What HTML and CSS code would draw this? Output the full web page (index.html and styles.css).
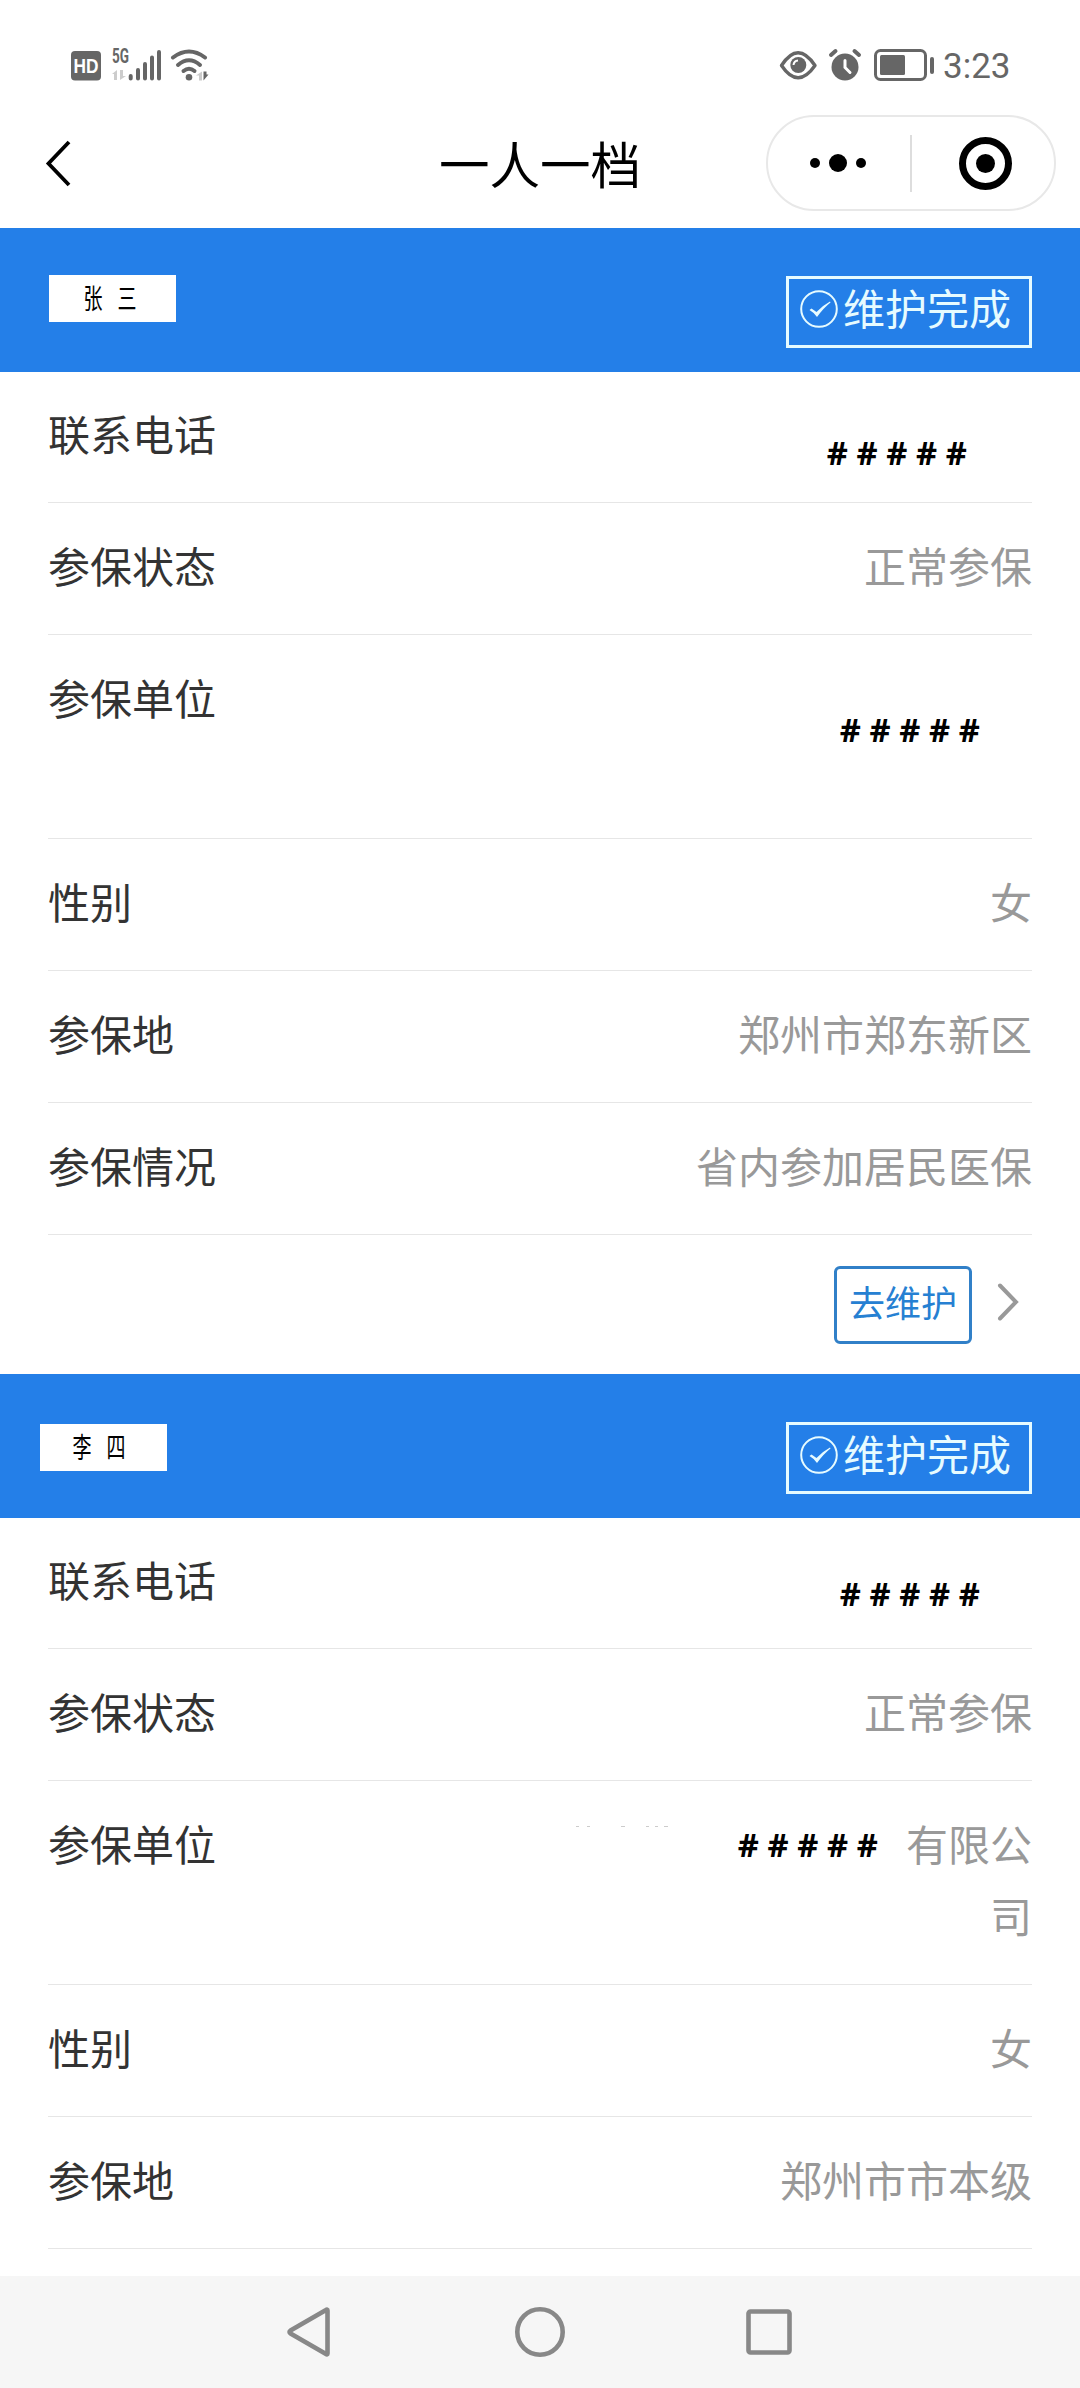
FILE: index.html
```html
<!DOCTYPE html>
<html lang="zh-CN">
<head>
<meta charset="utf-8">
<title>一人一档</title>
<link rel="stylesheet" href="styles.css">
</head>
<body>
<div class="screen">
  <div class="status-bar">
    <svg class="status-left" width="150" height="44" viewBox="66 44 150 44">
      <rect x="71" y="51" width="30" height="29.500" rx="4" fill="#666"/>
      <text x="86" y="73" class="hd" textLength="25" lengthAdjust="spacingAndGlyphs">HD</text>
      <text x="112" y="63" class="net" textLength="17" lengthAdjust="spacingAndGlyphs">5G</text>
      <path d="M112 74l5-4v10h-3v-6zM120 70v10l6-4h-3v-6z" fill="#ccc"/>
      <path d="M130.700 76v2.500M138 70v8.500M145 64v14.500M152 57.500v21M159 52v26.500" stroke="#666" stroke-width="4" stroke-linecap="round"/>
      <g fill="none" stroke="#666" stroke-width="4" stroke-linecap="round">
        <path d="M173 57.500Q189 45.500 205 57.500"/><path d="M178 65Q189 55.500 200 65"/><path d="M183.500 71Q189 66.500 194.500 71"/>
      </g>
      <circle cx="189" cy="77.300" r="3.300" fill="#666"/>
      <path d="M196 75.500l6-4v9h-3v-5z" fill="#ccc"/>
      <path d="M203.500 71.500v9l5-6h-2v-3z" fill="#666"/>
    </svg>
    <div class="status-right">
      <svg width="160" height="44" viewBox="778 44 160 44">
        <path d="M781.500 65.500Q798 40 815 65.500Q798 90 781.500 65.500z" fill="none" stroke="#666" stroke-width="3.400" stroke-linejoin="round"/>
        <circle cx="798.300" cy="65" r="8" fill="#666"/>
        <path d="M793.500 65a5 5 0 0 1 4.500-4.500" fill="none" stroke="#fff" stroke-width="2"/>
        <circle cx="845" cy="67" r="13.500" fill="#666"/>
        <path d="M845 60.500v7l5 5" fill="none" stroke="#fff" stroke-width="3" stroke-linecap="round"/>
        <path d="M831 55l4.500-4M859 55l-4.500-4" stroke="#666" stroke-width="4" stroke-linecap="round"/>
        <rect x="875.500" y="50.500" width="50" height="29" rx="5" fill="none" stroke="#666" stroke-width="3"/>
        <rect x="880" y="55" width="25" height="20" rx="1.500" fill="#666"/>
        <rect x="930" y="57" width="4" height="17" rx="2" fill="#666"/>
      </svg>
      <span class="clock">3:23</span>
    </div>
  </div>

  <div class="title-bar">
    <svg class="back" width="30" height="50" viewBox="44 138 30 50"><path d="M69 142L48.500 163.500L69 185" fill="none" stroke="#000" stroke-width="3.800"/></svg>
    <h1 class="title">一人一档</h1>
    <div class="capsule">
      <svg width="286" height="92" viewBox="768 117 286 92">
        <circle cx="815" cy="163" r="5"/><circle cx="838" cy="163" r="9"/><circle cx="861" cy="163" r="5"/>
        <path d="M911 135v57" stroke="#ddd" stroke-width="2"/>
        <circle cx="985.500" cy="163.500" r="23" fill="none" stroke="#000" stroke-width="7"/><circle cx="985.500" cy="163.500" r="9.500"/>
      </svg>
    </div>
  </div>

  <section class="person">
    <header class="person-head">
      <div class="name"><span>张</span><span>三</span></div>
      <div class="badge">
        <svg width="38" height="38" viewBox="0 0 38 38"><circle cx="19" cy="19" r="17.800" fill="none" stroke="#e6fbff" stroke-width="2"/><path d="M9.500 20l2-1.500l5 3.500q6-6.500 13.500-10.500l.500 1q-7 5.500-13.500 14.500q-3-4.500-7.500-7z" fill="#e6fbff"/></svg>
        <span>维护完成</span>
      </div>
    </header>
    <dl class="fields">
      <div class="row first"><dt>联系电话</dt><dd class="mask mask-phone"># # # # #</dd></div>
      <div class="row"><dt>参保状态</dt><dd>正常参保</dd></div>
      <div class="row tall"><dt>参保单位</dt><dd class="mask mask-unit"># # # # #</dd></div>
      <div class="row"><dt>性别</dt><dd>女</dd></div>
      <div class="row"><dt>参保地</dt><dd>郑州市郑东新区</dd></div>
      <div class="row"><dt>参保情况</dt><dd>省内参加居民医保</dd></div>
    </dl>
    <div class="actions">
      <button class="edit">去维护</button>
      <svg width="24" height="42" viewBox="0 0 24 42"><path d="M4 4.500L20 21L4 37.500" fill="none" stroke="#999" stroke-width="4" stroke-linecap="round"/></svg>
    </div>
  </section>

  <section class="person">
    <header class="person-head">
      <div class="name shifted"><span>李</span><span>四</span></div>
      <div class="badge">
        <svg width="38" height="38" viewBox="0 0 38 38"><circle cx="19" cy="19" r="17.800" fill="none" stroke="#e6fbff" stroke-width="2"/><path d="M9.500 20l2-1.500l5 3.500q6-6.500 13.500-10.500l.500 1q-7 5.500-13.500 14.500q-3-4.500-7.500-7z" fill="#e6fbff"/></svg>
        <span>维护完成</span>
      </div>
    </header>
    <dl class="fields">
      <div class="row first"><dt>联系电话</dt><dd class="mask mask-phone2"># # # # #</dd></div>
      <div class="row"><dt>参保状态</dt><dd>正常参保</dd></div>
      <div class="row tall"><dt>参保单位</dt>
        <dd class="company">
          <svg class="specks" width="100" height="3" viewBox="0 0 100 3"><path d="M1 1.500h3M12 1.500h3M46 1.500h4M71 1.500h3M80 1.500h3M89 1.500h4" stroke="#ccc" stroke-width="1"/></svg>
          <span class="mask"># # # # #</span><span class="company-name">有限公司</span>
        </dd>
      </div>
      <div class="row"><dt>性别</dt><dd>女</dd></div>
      <div class="row"><dt>参保地</dt><dd>郑州市市本级</dd></div>
    </dl>
  </section>

  <nav class="nav-bar">
    <svg width="600" height="112" viewBox="240 2276 600 112" fill="none" stroke="#888" stroke-width="4.600" stroke-linejoin="round">
      <path d="M327.500 2310.500Q327.500 2309 326 2310L290.500 2330.500Q288.500 2332 290.500 2333.500L326 2354Q327.500 2355 327.500 2353.500z"/>
      <circle cx="540" cy="2332" r="22.700"/>
      <rect x="748.500" y="2311.500" width="41" height="41" rx="2"/>
    </svg>
  </nav>
</div>
</body>
</html>
```
FILE: styles.css
```css
* { box-sizing: border-box; }
body {
  margin: 0;
  background: #fff;
  color: #333;
  font-family: "Noto Sans CJK SC", sans-serif;
}
h1, dl, dd { margin: 0; font-weight: 400; }
svg { display: block; flex: none; }
.screen {
  width: 1080px;
  height: 2388px;
  display: flex;
  flex-direction: column;
  overflow: hidden;
}

.status-bar {
  height: 100px;
  padding: 44px 71px 0 66px;
  display: flex;
  justify-content: space-between;
}
.status-right { display: flex; gap: 5px; }
.clock {
  font: 400 35px/45px Roboto, sans-serif;
  color: #666;
  width: 66px;
  white-space: nowrap;
}
.hd { font: 700 21px "Liberation Sans", sans-serif; fill: #fff; text-anchor: middle; }
.net { font: 700 20px Roboto, sans-serif; fill: #666; }

.title-bar {
  height: 128px;
  padding: 15px 24px 0 44px;
  display: grid;
  grid-template-columns: 290px 1fr 290px;
  align-items: start;
}
.back { margin-top: 23px; }
.title {
  color: #000;
  font-size: 50.500px;
  line-height: 95px;
  text-align: center;
  margin-left: -20px;
}
.capsule {
  width: 290px;
  height: 96px;
  border: 2px solid #e8e8e8;
  border-radius: 48px;
}

.person-head {
  height: 144px;
  padding: 48px 48px 0 49px;
  background: #247fe8;
  display: flex;
  justify-content: space-between;
}
.name {
  width: 127px;
  height: 47px;
  margin-top: -1px;
  padding-left: 30px;
  display: flex;
  gap: 6px;
  background: #fff;
  color: #000;
  font-size: 28px;
  line-height: 44px;
}
.name span { width: 28px; transform: scaleX(.68); }
.name.shifted { margin: 2px 0 0 -9px; padding-left: 28px; }
.badge {
  width: 246px;
  height: 72px;
  padding: 11px 0 0 11px;
  border: 3px solid #e6fbff;
  display: flex;
  gap: 5px;
  color: #e6fbff;
  font-size: 42px;
  line-height: 34px;
}

.fields { padding: 0 48px; }
.row {
  height: 132px;
  padding-top: 26px;
  border-bottom: 1px solid #e6e6e6;
  display: flex;
  justify-content: space-between;
  font-size: 42px;
  line-height: 72px;
}
.row.first { height: 131px; padding-top: 25px; }
.row.tall { height: 204px; }
dd { color: #999; text-align: right; }
.mask {
  color: #000;
  font: 700 32.700px/72px "Open Sans", sans-serif;
  word-spacing: .200px;
  white-space: nowrap;
}
.mask-phone { padding: 20px 65px 0 0; }
.mask-unit { padding: 33px 52px 0 0; }
.mask-phone2 { padding: 15px 52px 0 0; }
.company { display: flex; }
.company .mask { margin-right: 28px; padding-top: 2px; }
.company-name { width: 126px; word-break: break-all; }
.specks { margin: 18px 63px 0 0; }

.actions {
  height: 139px;
  padding: 31px 60px 0 0;
  display: flex;
  justify-content: flex-end;
  gap: 24px;
}
.actions svg { margin-top: 15px; }
.edit {
  width: 138px;
  height: 78px;
  padding: 0 0 7px;
  background: #fff;
  border: 3px solid #3180c8;
  border-radius: 6px;
  color: #2680d2;
  font: 400 36px/65px "Noto Sans CJK SC", sans-serif;
}

.nav-bar {
  height: 112px;
  margin-top: auto;
  background: #f6f6f6;
  display: flex;
  justify-content: center;
}
```
